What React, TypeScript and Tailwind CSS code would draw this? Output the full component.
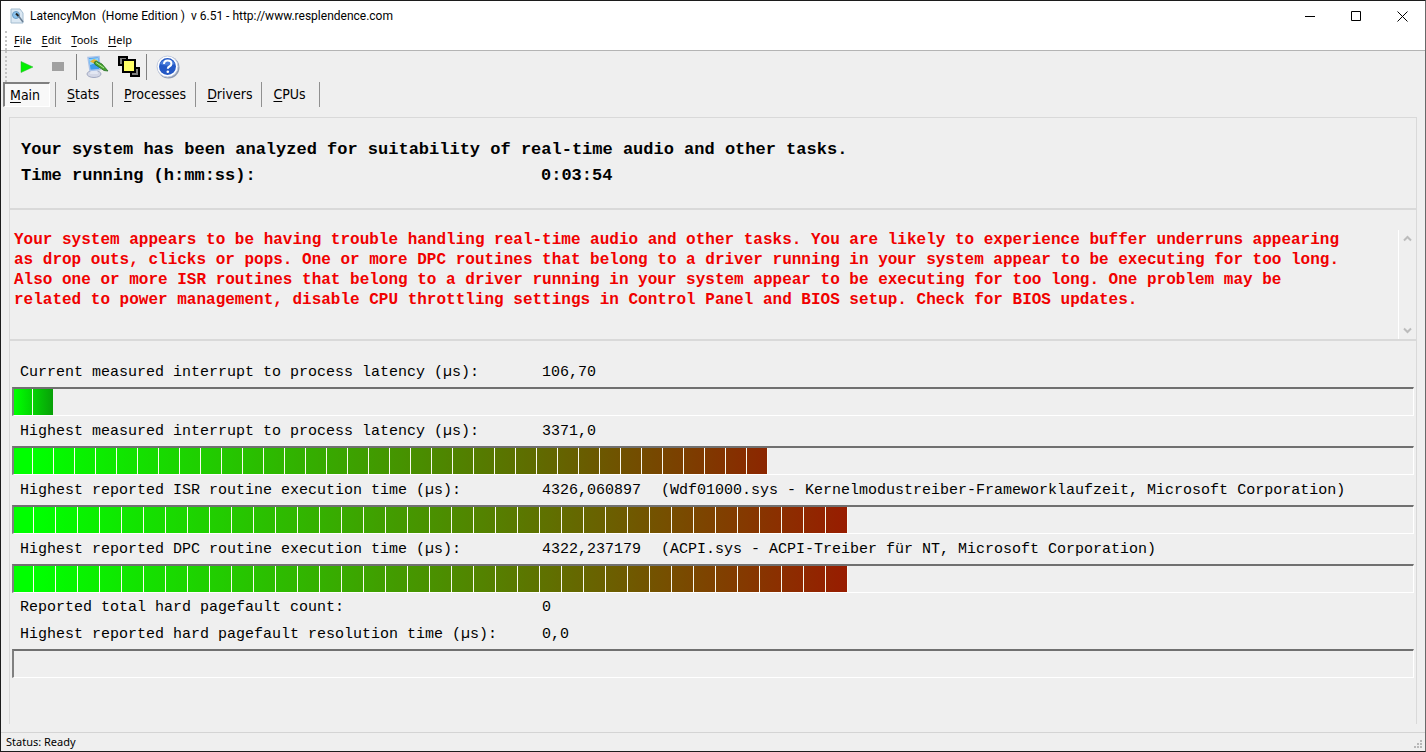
import React from "react";

const menus = ["File", "Edit", "Tools", "Help"];
const tabs = ["Main", "Stats", "Processes", "Drivers", "CPUs"];

interface BarProps {
  label: string;
  percent: number;
  end?: string;
  step?: number;
}

const Bar: React.FC<BarProps> = ({ label, percent, end = "#981c00", step = 22 }) => {
  return (
    <div
      role="progressbar"
      aria-label={label}
      aria-valuenow={percent}
      className="h-[29px] border-t-2 border-r border-b border-l-2 border-t-[#707070] border-r-white border-b-white border-l-[#808080]"
    >
      <div
        className="h-full"
        style={{
          width: `${percent}%`,
          backgroundImage: `linear-gradient(90deg, transparent ${step - 1}px, #fafaf0 ${step - 1}px), linear-gradient(90deg, #00ff00 0%, #00ff00 3%, ${end} 100%)`,
          backgroundSize: `${step}px 100%, 100% 100%`,
          backgroundPosition: "-2px 0, 0 0",
        }}
      />
    </div>
  );
};

interface ReadingProps {
  label: string;
  value: string;
  detail?: string;
  compact?: boolean;
}

const Reading: React.FC<ReadingProps> = ({ label, value, detail, compact }) => {
  return (
    <div
      className={`flex items-center pl-2 text-[15px] leading-5 whitespace-pre ${
        compact ? "h-[26px] pt-1" : "h-[30px] pt-px"
      }`}
    >
      <span className="w-[522px] shrink-0">{label}</span>
      <span>{value}</span>
      {detail && <span className="ml-5">{detail}</span>}
    </div>
  );
};

const AppIcon = () => (
  <svg width="14" height="16" viewBox="0 0 14 16" aria-hidden="true">
    <path d="M1 1h9l3 4v10H1z" fill="#dbe8f3" stroke="#a3bccf" />
    <circle cx="6" cy="7" r="3.5" fill="#8cc4ee" stroke="#6d9dc4" />
    <path d="M6 5.500l2.500 2.500" stroke="#222" strokeWidth="2" />
    <path d="M8.500 8l4.500 6" stroke="#6b7f94" strokeWidth="1.500" />
  </svg>
);

const MonitorIcon = () => (
  <svg width="24" height="24" viewBox="0 0 24 24" aria-hidden="true">
    <ellipse cx="9" cy="19" rx="7" ry="3.5" fill="#d3d7e6" stroke="#a3aac2" />
    <path d="M6 14h6l1 5H5z" fill="#e3e7f2" />
    <path d="M3 2.500l11-1 1 13-10 1z" fill="#3f9cec" stroke="#a9c3ea" strokeWidth="1.500" />
    <path d="M4 4l9-1 .5 4-8.500 3z" fill="#8fd4ff" />
    <path d="M5 6.500l4-2.500 4 2-4 2.500z" fill="#e6b53a" />
    <path d="M9 7.500l2-1.500 6 3 6 7-4-.5-9-6z" fill="#45a52c" stroke="#2a6f2a" strokeWidth=".8" />
    <path d="M11 7.500l8 5.500" stroke="#b6e69b" />
  </svg>
);

const WindowsIcon = () => (
  <svg width="22" height="22" viewBox="0 0 22 22" aria-hidden="true">
    <path d="M1 1h8v8H1z" fill="#808080" stroke="#000" strokeWidth="2" />
    <path d="M13 12h8v8h-8z" fill="#808080" stroke="#000" strokeWidth="2" />
    <path d="M5 4h12v12H5z" fill="#ffff66" stroke="#000" strokeWidth="2" />
  </svg>
);

const HelpIcon = () => (
  <svg width="24" height="24" viewBox="0 0 24 24" aria-hidden="true">
    <circle cx="12.500" cy="12.500" r="11" fill="#8f9bb3" />
    <circle cx="11.500" cy="11.500" r="10.500" fill="#fff" stroke="#c3cce0" />
    <circle cx="11.500" cy="11.500" r="8.500" fill="#2458c5" />
    <path d="M4 9a8 7 0 0 1 15 0q-7 3-15 0z" fill="#4a7ddb" />
    <path
      d="M8 9q0-3.500 3.700-3.500t3.700 3.200q0 1.800-2 2.800-1.600.8-1.600 2.300"
      fill="none"
      stroke="#fff"
      strokeWidth="2"
    />
    <circle cx="11.800" cy="16.800" r="1.300" fill="#fff" />
  </svg>
);

const Grip = () => <span className="ml-1 h-full w-0 border-l-2 border-dotted border-[#c4c4c4]" />;

const Mnemonic = ({ text }: { text: string }) => (
  <span>
    <span className="underline underline-offset-2">{text[0]}</span>
    {text.slice(1)}
  </span>
);

const App: React.FC = () => {
  return (
    <div className="flex min-h-screen flex-col border border-[#1c1c1c] border-r-[#696969] bg-[#efefef] font-['Noto_Sans',sans-serif] text-black">
      <header className="border-b border-[#b4b4b4] bg-white">
        <div className="flex h-[30px] items-center pl-[9px]">
          <AppIcon />
          <h1 className="ml-[6px] font-['Roboto',sans-serif] text-[12px] whitespace-pre">
            {"LatencyMon  (Home Edition )  v 6.51 - http://www.resplendence.com"}
          </h1>
          <div className="ml-auto flex h-full">
            <button aria-label="Minimize" className="flex w-[46px] items-center justify-center">
              <svg width="11" height="11" viewBox="0 0 11 11" stroke="#000">
                <path d="M0 5.500h10" />
              </svg>
            </button>
            <button aria-label="Maximize" className="flex w-[46px] items-center justify-center">
              <svg width="11" height="11" viewBox="0 0 11 11" stroke="#000" fill="none">
                <path d="M.5.500h9v9h-9z" />
              </svg>
            </button>
            <button aria-label="Close" className="flex w-[46px] items-center justify-center">
              <svg width="11" height="11" viewBox="0 0 11 11" stroke="#000">
                <path d="M.5.500l10 10M10.500.500l-10 10" />
              </svg>
            </button>
          </div>
        </div>
        <nav className="flex h-[19px] items-center">
          <Grip />
          <div className="ml-[7px] flex gap-[10px] text-[11px]">
            {menus.map((menu) => (
              <button key={menu}>
                <Mnemonic text={menu} />
              </button>
            ))}
          </div>
        </nav>
      </header>

      <div className="flex h-[31px] items-center">
        <Grip />
        <button aria-label="Start" className="ml-[13px]">
          <svg width="14" height="12" viewBox="0 0 14 12">
            <path d="M1 .5l12 5.500-12 5.500z" fill="#00f000" stroke="#2fb52f" strokeWidth=".5" />
          </svg>
        </button>
        <button aria-label="Stop" className="ml-[18px] h-[9px] w-3 bg-[#a0a0a0]" />
        <span className="ml-3 h-[26px] w-px bg-[#808080]" />
        <button aria-label="Options" className="ml-2">
          <MonitorIcon />
        </button>
        <button aria-label="Windows" className="ml-[9px]">
          <WindowsIcon />
        </button>
        <span className="ml-[6px] h-[26px] w-px bg-[#808080]" />
        <button aria-label="Help" className="ml-[9px]">
          <HelpIcon />
        </button>
      </div>

      <div
        role="tablist"
        className="flex h-[25px] items-center pl-[2px] font-['DejaVu_Sans_Condensed','DejaVu_Sans',sans-serif] text-[14px]"
      >
        {tabs.map((tab, i) =>
          i === 0 ? (
            <button
              key={tab}
              role="tab"
              aria-selected="true"
              className="mr-[5px] h-full border-t-2 border-r border-b border-l-2 border-[#808080] border-r-white border-b-white bg-[#f8f8f8] pr-[9px] pl-[5px]"
            >
              <Mnemonic text={tab} />
            </button>
          ) : (
            <button
              key={tab}
              role="tab"
              aria-selected="false"
              className="h-full min-w-[58px] border-r border-[#909090] pr-[9px] pl-[11px] text-left nth-2:border-l"
            >
              <Mnemonic text={tab} />
            </button>
          )
        )}
      </div>

      <main className="mx-2 mt-[10px] flex flex-1 flex-col font-['Liberation_Mono',monospace] font-bold">
        <section className="h-[92px] border border-[#d9d9d9] pt-[19px] pl-[11px] text-[17px] leading-[26px]">
          <p>Your system has been analyzed for suitability of real-time audio and other tasks.</p>
          <p className="flex">
            <span className="w-[520px]">Time running (h:mm:ss):</span>
            <span>0:03:54</span>
          </p>
        </section>
        <section className="flex h-[131px] border border-[#d9d9d9] pt-5">
          <p className="flex-1 pl-1 text-[16px] leading-5 whitespace-pre text-[#f00000]">
            Your system appears to be having trouble handling real-time audio and other tasks. You are likely to experience buffer underruns appearing
            <br />
            as drop outs, clicks or pops. One or more DPC routines that belong to a driver running in your system appear to be executing for too long.
            <br />
            Also one or more ISR routines that belong to a driver running in your system appear to be executing for too long. One problem may be
            <br />
            related to power management, disable CPU throttling settings in Control Panel and BIOS setup. Check for BIOS updates.
          </p>
          <div className="flex w-[18px] shrink-0 flex-col items-center justify-between border-l border-white py-[5px]">
            <button aria-label="Scroll up">
              <svg width="9" height="7" viewBox="0 0 9 7" fill="none" stroke="#bcbcbc" strokeWidth="2">
                <path d="M1 5.500l3.500-3.500 3.500 3.500" />
              </svg>
            </button>
            <button aria-label="Scroll down">
              <svg width="9" height="7" viewBox="0 0 9 7" fill="none" stroke="#bcbcbc" strokeWidth="2">
                <path d="M1 1.500l3.500 3.500 3.500-3.500" />
              </svg>
            </button>
          </div>
        </section>
        <section className="mb-2 flex-1 border-x border-t border-[#d9d9d9] px-[2px] pt-4 font-normal">
          <Reading label="Current measured interrupt to process latency (µs):" value="106,70" />
          <Bar label="Current latency" percent={2.8} end="#08a008" step={21} />
          <Reading label="Highest measured interrupt to process latency (µs):" value="3371,0" />
          <Bar label="Highest latency" percent={53.9} end="#8c2600" step={21} />
          <Reading
            label="Highest reported ISR routine execution time (µs):"
            value="4326,060897"
            detail="(Wdf01000.sys - Kernelmodustreiber-Frameworklaufzeit, Microsoft Corporation)"
          />
          <Bar label="ISR execution time" percent={59.6} />
          <Reading
            label="Highest reported DPC routine execution time (µs):"
            value="4322,237179"
            detail="(ACPI.sys - ACPI-Treiber für NT, Microsoft Corporation)"
          />
          <Bar label="DPC execution time" percent={59.6} />
          <Reading label="Reported total hard pagefault count:" value="0" compact />
          <Reading label="Highest reported hard pagefault resolution time (µs):" value="0,0" />
          <Bar label="Pagefault resolution time" percent={0} />
        </section>
      </main>

      <footer className="flex h-[19px] items-center border-t border-[#d4d4d4] pr-[2px] pl-[5px] text-[11px]">
        <span>Status: Ready</span>
        <svg className="ml-auto self-end" width="9" height="11" viewBox="0 0 9 11" fill="#b8b8b8" aria-hidden="true">
          <path d="M6 0h2v2H6zM3 3h2v2H3zM6 3h2v2H6zM0 6h2v2H0zM3 6h2v2H3zM6 6h2v2H6z" />
        </svg>
      </footer>
    </div>
  );
};

export default App;
